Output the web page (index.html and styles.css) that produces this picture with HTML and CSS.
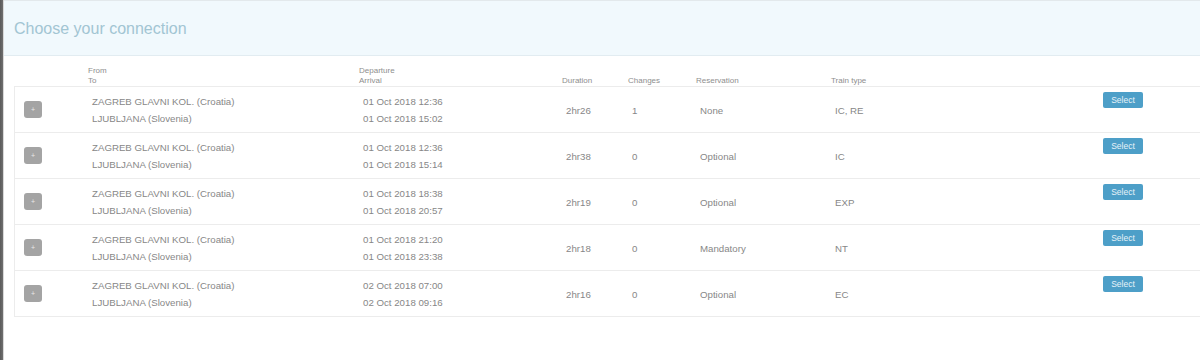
FILE: index.html
```html
<!DOCTYPE html>
<html>
<head>
<meta charset="utf-8">
<link rel="stylesheet" href="styles.css">
</head>
<body>
<div class="page">
  <div class="edge"></div>
  <div class="modal">
    <div class="modal-header">
      <h1 class="title">Choose your connection</h1>
    </div>
    <div class="modal-body">
      <div class="grid head">
        <div></div>
        <div class="hcell two">From<br>To</div>
        <div class="hcell two">Departure<br>Arrival</div>
        <div class="hcell">Duration</div>
        <div class="hcell">Changes</div>
        <div class="hcell">Reservation</div>
        <div class="hcell">Train type</div>
        <div></div>
      </div>
      <div class="table">
        <div class="grid row">
          <div class="c-btn"><span class="expand">+</span></div>
          <div class="cell two"><div>ZAGREB GLAVNI KOL. (Croatia)</div><div>LJUBLJANA (Slovenia)</div></div>
          <div class="cell two"><div>01 Oct 2018 12:36</div><div>01 Oct 2018 15:02</div></div>
          <div class="cell mid">2hr26</div>
          <div class="cell mid">1</div>
          <div class="cell mid">None</div>
          <div class="cell mid">IC, RE</div>
          <div class="c-sel"><span class="select">Select</span></div>
        </div>
        <div class="grid row">
          <div class="c-btn"><span class="expand">+</span></div>
          <div class="cell two"><div>ZAGREB GLAVNI KOL. (Croatia)</div><div>LJUBLJANA (Slovenia)</div></div>
          <div class="cell two"><div>01 Oct 2018 12:36</div><div>01 Oct 2018 15:14</div></div>
          <div class="cell mid">2hr38</div>
          <div class="cell mid">0</div>
          <div class="cell mid">Optional</div>
          <div class="cell mid">IC</div>
          <div class="c-sel"><span class="select">Select</span></div>
        </div>
        <div class="grid row">
          <div class="c-btn"><span class="expand">+</span></div>
          <div class="cell two"><div>ZAGREB GLAVNI KOL. (Croatia)</div><div>LJUBLJANA (Slovenia)</div></div>
          <div class="cell two"><div>01 Oct 2018 18:38</div><div>01 Oct 2018 20:57</div></div>
          <div class="cell mid">2hr19</div>
          <div class="cell mid">0</div>
          <div class="cell mid">Optional</div>
          <div class="cell mid">EXP</div>
          <div class="c-sel"><span class="select">Select</span></div>
        </div>
        <div class="grid row">
          <div class="c-btn"><span class="expand">+</span></div>
          <div class="cell two"><div>ZAGREB GLAVNI KOL. (Croatia)</div><div>LJUBLJANA (Slovenia)</div></div>
          <div class="cell two"><div>01 Oct 2018 21:20</div><div>01 Oct 2018 23:38</div></div>
          <div class="cell mid">2hr18</div>
          <div class="cell mid">0</div>
          <div class="cell mid">Mandatory</div>
          <div class="cell mid">NT</div>
          <div class="c-sel"><span class="select">Select</span></div>
        </div>
        <div class="grid row">
          <div class="c-btn"><span class="expand">+</span></div>
          <div class="cell two"><div>ZAGREB GLAVNI KOL. (Croatia)</div><div>LJUBLJANA (Slovenia)</div></div>
          <div class="cell two"><div>02 Oct 2018 07:00</div><div>02 Oct 2018 09:16</div></div>
          <div class="cell mid">2hr16</div>
          <div class="cell mid">0</div>
          <div class="cell mid">Optional</div>
          <div class="cell mid">EC</div>
          <div class="c-sel"><span class="select">Select</span></div>
        </div>
      </div>
    </div>
  </div>
</div>
</body>
</html>
```
FILE: styles.css
```css
html, body {
  margin: 0;
  padding: 0;
  background: #ffffff;
  overflow: hidden;
  font-family: "Liberation Sans", Arial, sans-serif;
}
.page {
  display: flex;
  width: 1200px;
  height: 360px;
}
.edge {
  width: 3px;
  flex: none;
  background: linear-gradient(to right, #5a5a5a, #6f6f6f);
}
.modal {
  flex: 1;
  min-width: 0;
  background: #fff;
  border-left: 1px solid #d8d8d8;
}
.modal-header {
  height: 54px;
  background: #f1f9fd;
  border-top: 1px solid #e3e9ec;
  border-bottom: 1px solid #e2ecf1;
  display: flex;
  align-items: center;
  padding-left: 10px;
}
.title {
  margin: 0;
  font-weight: normal;
  font-size: 16px;
  color: #a2c5d3;
  position: relative;
  top: 1px;
}
.modal-body {
  padding: 10px 0 0 10px;
}
.grid {
  display: grid;
  grid-template-columns: 74px 271px 203px 66px 68px 135px 268px 100px;
}
.head {
  font-size: 8px;
  line-height: 10px;
  color: #8e8e8e;
  align-items: end;
}
.table {
  border: 1px solid #ececec;
  border-right: none;
}
.row {
  border-top: 1px solid #ececec;
  height: 45px;
  font-size: 9.7px;
  color: #878787;
}
.row:first-child {
  border-top: none;
}
.cell {
  padding-left: 3px;
  white-space: nowrap;
}
.cell.two {
  padding-top: 6px;
  line-height: 17px;
}
.cell.mid {
  display: flex;
  align-items: center;
  padding-top: 1px;
}
.c-btn {
  display: flex;
  align-items: center;
  padding-left: 9px;
}
.expand {
  width: 18px;
  height: 17px;
  border-radius: 3px;
  background: #a4a4a4;
  color: #e8e8e8;
  font-size: 7px;
  line-height: 17px;
  text-align: center;
}
.c-sel {
  padding-top: 5px;
  padding-left: 3px;
}
.select {
  display: inline-block;
  width: 40px;
  height: 16px;
  line-height: 16px;
  text-align: center;
  border-radius: 2px;
  background: #4d9fc8;
  color: #e6f2f8;
  font-size: 8.5px;
}
```
